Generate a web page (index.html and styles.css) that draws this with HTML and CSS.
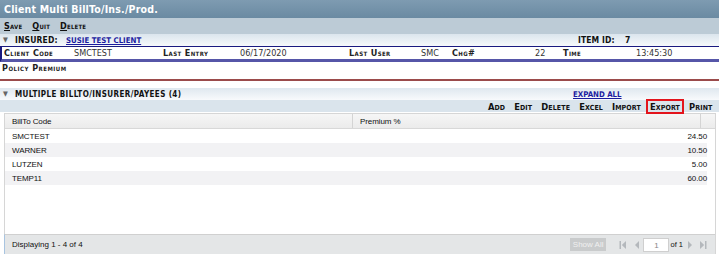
FILE: index.html
```html
<!DOCTYPE html>
<html>
<head>
<meta charset="utf-8">
<link rel="stylesheet" href="styles.css">
</head>
<body>
<div class="titlebar">Client Multi BillTo/Ins./Prod.</div>
<div class="menubar">
  <span class="mi"><u>S</u>ave</span>
  <span class="mi"><u>Q</u>uit</span>
  <span class="mi"><u>D</u>elete</span>
</div>
<div class="insured">
  <span class="tri">▼</span>
  <span class="ins-label">INSURED:</span>
  <a class="ins-link" href="#">SUSIE TEST CLIENT</a>
  <span class="spacer"></span>
  <span class="item-label">ITEM ID:</span>
  <span class="item-val">7</span>
</div>
<div class="clientrow">
  <span class="lbl c1">Client Code</span>
  <span class="val c2">SMCTEST</span>
  <span class="lbl c3">Last Entry</span>
  <span class="val c4">06/17/2020</span>
  <span class="lbl c5">Last User</span>
  <span class="val c6">SMC</span>
  <span class="lbl c7">Chg#</span>
  <span class="val c8">22</span>
  <span class="lbl c9">Time</span>
  <span class="val c10">13:45:30</span>
</div>
<div class="policy"><span class="lbl plbl">Policy Premium</span></div>
<div class="section">
  <span class="tri">▼</span>
  <span class="sec-label">MULTIPLE BILLTO/INSURER/PAYEES (4)</span>
  <span class="spacer"></span>
  <a class="expand" href="#">EXPAND ALL</a>
</div>
<div class="toolbar">
  <span class="tb">Add</span>
  <span class="tb">Edit</span>
  <span class="tb">Delete</span>
  <span class="tb">Excel</span>
  <span class="tb">Import</span>
  <span class="tb boxed">Export</span>
  <span class="tb">Print</span>
</div>
<div class="grid">
  <div class="ghead">
    <div class="gc col1">BillTo Code</div>
    <div class="gc col2">Premium %</div>
    <div class="gc col3"></div>
  </div>
  <div class="gbody">
    <div class="grow"><div class="gc col1">SMCTEST</div><div class="gc col2 num">24.50</div></div>
    <div class="grow alt"><div class="gc col1">WARNER</div><div class="gc col2 num">10.50</div></div>
    <div class="grow"><div class="gc col1">LUTZEN</div><div class="gc col2 num">5.00</div></div>
    <div class="grow alt"><div class="gc col1">TEMP11</div><div class="gc col2 num">60.00</div></div>
  </div>
  <div class="gfoot">
    <span class="disp">Displaying 1 - 4 of 4</span>
    <span class="spacer"></span>
    <span class="showall">Show All</span>
    <span class="pg pg-first">
      <svg width="8" height="10" viewBox="0 0 8 10"><rect x="0.5" y="1" width="1.5" height="8" fill="#b4b8bc"/><path d="M7 1 L2.8 5 L7 9 Z" fill="#b4b8bc"/></svg>
    </span>
    <span class="pg pg-prev">
      <svg width="6" height="10" viewBox="0 0 6 10"><path d="M5 1 L1 5 L5 9 Z" fill="#b4b8bc"/></svg>
    </span>
    <span class="pgbox">1</span>
    <span class="of">of 1</span>
    <span class="pg pg-next">
      <svg width="6" height="10" viewBox="0 0 6 10"><path d="M1 1 L5 5 L1 9 Z" fill="#b4b8bc"/></svg>
    </span>
    <span class="pg pg-last">
      <svg width="8" height="10" viewBox="0 0 8 10"><path d="M1 1 L5.2 5 L1 9 Z" fill="#b4b8bc"/><rect x="6" y="1" width="1.5" height="8" fill="#b4b8bc"/></svg>
    </span>
  </div>
</div>
</body>
</html>
```

FILE: styles.css
```css
html, body {
  margin: 0;
  padding: 0;
  background: #fff;
}
body {
  width: 719px;
  height: 256px;
  overflow: hidden;
  font-family: "Liberation Sans", Arial, sans-serif;
}
.spacer { flex: 1; }

.titlebar {
  height: 18px;
  line-height: 19px;
  padding-left: 4px;
  background: linear-gradient(#7e9bb1, #6a8aa2);
  color: #fff;
  font-family: "DejaVu Sans Condensed", "DejaVu Sans", sans-serif;
  font-weight: bold;
  font-size: 10.5px;
  letter-spacing: 0.2px;
}

.menubar {
  height: 16px;
  display: flex;
  align-items: center;
  gap: 10px;
  padding-left: 4px;
  background: #bccbd6;
  font-family: "DejaVu Sans Condensed", "DejaVu Sans", sans-serif;
  font-weight: bold;
  font-size: 9px;
  letter-spacing: 0.2px;
  font-variant: small-caps;
  color: #111;
}

.insured {
  height: 12px;
  display: flex;
  align-items: center;
  padding-left: 3px;
  background: linear-gradient(#dbe5ed, #f6f9fb);
  font-family: "DejaVu Sans Condensed", "DejaVu Sans", sans-serif;
  font-weight: bold;
  font-size: 8.5px;
  color: #111;
}
.tri {
  font-size: 7px;
  color: #666;
  width: 12px;
}
.ins-label { width: 51px; letter-spacing: 0.15px; }
.ins-link {
  color: #1c1ca0;
  text-decoration: underline;
  font-size: 7.8px;
}
.item-label { letter-spacing: 0.1px; width: 47px; }
.item-val { width: 94px; }

.clientrow {
  height: 12px;
  display: flex;
  align-items: center;
  border-top: 1px solid #1a1a80;
  border-left: 2px solid #1a1a80;
  border-bottom: 3px solid #5656a8;
  padding-left: 2px;
  font-size: 9px;
}
.lbl {
  font-family: "DejaVu Sans Condensed", "DejaVu Sans", sans-serif;
  font-weight: bold;
  font-variant: small-caps;
  font-size: 9px;
  letter-spacing: 0.4px;
  color: #222;
}
.val {
  font-family: "DejaVu Sans Condensed", "DejaVu Sans", sans-serif;
  font-size: 9px;
  color: #333;
}
.c1 { width: 70px; }
.c2 { width: 89px; }
.c3 { width: 77px; }
.c4 { width: 109px; }
.c5 { width: 72px; }
.c6 { width: 31px; }
.c7 { width: 83px; }
.c8 { width: 28px; }
.c9 { width: 73px; }

.policy {
  height: 19px;
  display: flex;
  align-items: flex-start;
  padding-left: 2px;
  padding-top: 1px;
  box-sizing: border-box;
  border-bottom: 2px solid #9b4b4b;
}
.plbl { letter-spacing: 0.5px; }

.section {
  margin-top: 7px;
  height: 12px;
  display: flex;
  align-items: center;
  padding-left: 3px;
  background: linear-gradient(#dfe8ef, #f8fafc);
  font-family: "DejaVu Sans Condensed", "DejaVu Sans", sans-serif;
  font-weight: bold;
  font-size: 8px;
  color: #111;
}
.sec-label { letter-spacing: 0.4px; }
.expand {
  color: #1c1ca0;
  text-decoration: underline;
  font-size: 7.8px;
  width: 146px;
}

.toolbar {
  height: 12px;
  display: flex;
  align-items: center;
  justify-content: flex-end;
  padding-right: 2px;
  background: #dae4ec;
  font-family: "DejaVu Sans Condensed", "DejaVu Sans", sans-serif;
  font-weight: bold;
  font-size: 9.3px;
  letter-spacing: 0.12px;
  font-variant: small-caps;
  color: #111;
}
.tb { padding: 0 4.5px; }
.boxed {
  outline: 2px solid #e3141c;
  outline-offset: 0;
  padding: 0 2px;
  margin: 0 2.5px;
}

.grid {
  margin: 1px 3px 0 4px;
  border: 1px solid #d6d6d6;
  border-bottom: none;
  display: flex;
  flex-direction: column;
  height: 140px;
  font-size: 8px;
  color: #111;
}
.ghead {
  height: 15px;
  box-sizing: border-box;
  display: flex;
  background: linear-gradient(#f6f6f6, #ebebeb);
  border-bottom: 1px solid #d8d8d8;
}
.ghead .gc {
  line-height: 16px;
  border-right: 1px solid #d4d4d4;
}
.gc {
  padding: 0 7px;
  box-sizing: border-box;
  letter-spacing: -0.1px;
}
.col1 { width: 351px; }
.col2 { width: 351px; }
.col3 { flex: 1; border-right: none !important; }
.gbody {
  flex: 1;
}
.grow {
  display: flex;
  height: 14px;
  line-height: 16px;
  width: 702px;
}
.grow.alt { background: #f2f2f4; }
.num { text-align: right; padding-right: 0; }

.gfoot {
  height: 19px;
  display: flex;
  align-items: center;
  background: #e4e6e7;
  border-top: 1px solid #d0d0d0;
  border-left: 1px solid #a8c4e0;
  margin-left: -1px;
  padding-left: 7px;
  padding-right: 8px;
  font-size: 8px;
}
.showall {
  background: #c9cbcc;
  color: #f0f0f0;
  padding: 2px 3px;
  margin-right: 13px;
}
.pg { display: inline-flex; }
.pg-first { margin-right: 7px; }
.pg-prev { margin-right: 3px; }
.pg-next { margin-right: 6px; }
.pgbox {
  width: 26px;
  height: 14px;
  line-height: 14px;
  text-align: center;
  background: #fff;
  border: 1px solid #cfcfcf;
  color: #888;
  box-sizing: border-box;
}
.of { font-size: 7.5px; margin: 0 4px 0 1px; }
```
